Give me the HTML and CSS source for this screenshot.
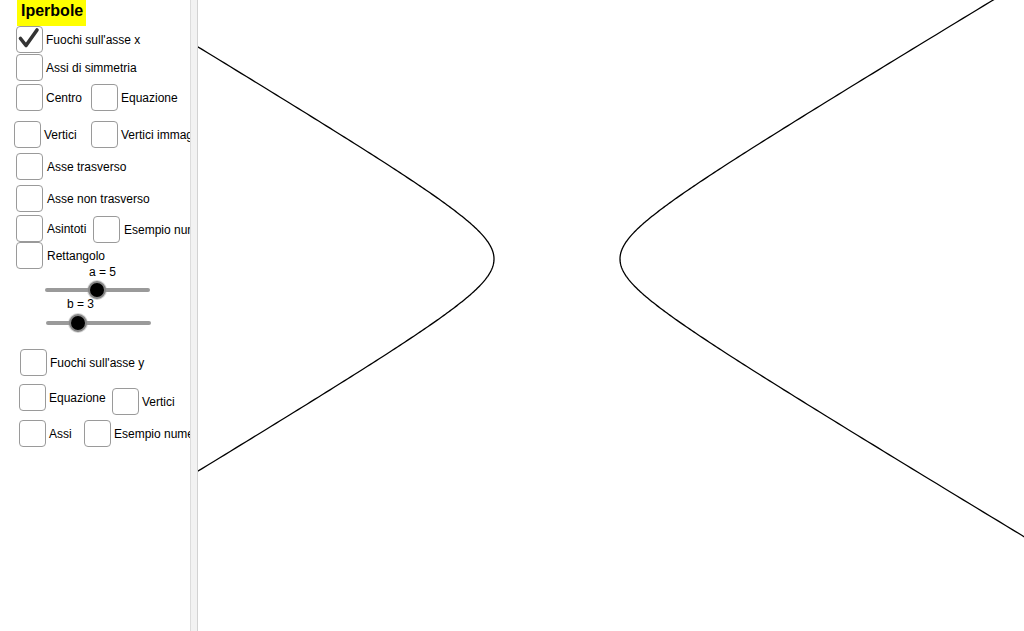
FILE: index.html
```html
<!DOCTYPE html>
<html>
<head>
<meta charset="utf-8">
<link rel="stylesheet" href="styles.css">
</head>
<body>
<div class="app">
  <aside class="panel">
    <div class="title">Iperbole</div>

    <div class="row r1">
      <span class="cb checked"><svg viewBox="0 0 27 27"><path d="M4.5 12.5 L10 19.5 L21 4" /></svg></span>
      <span class="lbl">Fuochi sull'asse x</span>
    </div>
    <div class="row r2">
      <span class="cb"></span><span class="lbl">Assi di simmetria</span>
    </div>
    <div class="row r3">
      <span class="item w75"><span class="cb"></span><span class="lbl">Centro</span></span>
      <span class="item"><span class="cb"></span><span class="lbl">Equazione</span></span>
    </div>
    <div class="row r4">
      <span class="item w77"><span class="cb"></span><span class="lbl">Vertici</span></span>
      <span class="item"><span class="cb"></span><span class="lbl">Vertici immaginari</span></span>
    </div>
    <div class="row r5">
      <span class="cb"></span><span class="lbl wide">Asse trasverso</span>
    </div>
    <div class="row r6">
      <span class="cb"></span><span class="lbl wide">Asse non trasverso</span>
    </div>
    <div class="row r7">
      <span class="item w77"><span class="cb"></span><span class="lbl wide">Asintoti</span></span>
      <span class="item down1"><span class="cb"></span><span class="lbl wide">Esempio numerico</span></span>
    </div>
    <div class="row r8">
      <span class="cb"></span><span class="lbl wide">Rettangolo</span>
    </div>

    <div class="slider sa">
      <div class="slabel">a = 5</div>
      <div class="track"><span class="knob" style="left: 49.5%"></span></div>
    </div>
    <div class="slider sb">
      <div class="slabel">b = 3</div>
      <div class="track"><span class="knob" style="left: 30.5%"></span></div>
    </div>

    <div class="row r9">
      <span class="cb"></span><span class="lbl">Fuochi sull'asse y</span>
    </div>
    <div class="row r10">
      <span class="item w93"><span class="cb"></span><span class="lbl">Equazione</span></span>
      <span class="item down4"><span class="cb"></span><span class="lbl">Vertici</span></span>
    </div>
    <div class="row r11">
      <span class="item w65"><span class="cb"></span><span class="lbl">Assi</span></span>
      <span class="item"><span class="cb"></span><span class="lbl">Esempio numerico</span></span>
    </div>
  </aside>
  <div class="divider"></div>
  <main class="graph">
    <svg id="plot" class="plot" viewBox="0 0 826 631" preserveAspectRatio="none">
      <path id="left" class="curve" d=""></path>
      <path id="right" class="curve" d=""></path>
    </svg>
  </main>
</div>
<script src="script.js"></script>
</body>
</html>
```

FILE: styles.css
```css
* { box-sizing: border-box; }
html, body {
  margin: 0;
  padding: 0;
  background: #ffffff;
  width: 1024px;
  height: 631px;
  overflow: hidden;
  font-family: "Liberation Sans", Arial, sans-serif;
  color: #000;
}
.app {
  display: flex;
  width: 1024px;
  height: 631px;
}
.panel {
  width: 190px;
  flex: 0 0 190px;
  height: 631px;
  overflow: hidden;
  white-space: nowrap;
  background: #fff;
}
.title {
  display: inline-block;
  margin-left: 17px;
  height: 26px;
  width: 69px;
  padding-left: 4px;
  background: #ffff00;
  font-weight: bold;
  font-size: 16px;
  line-height: 22px;
}
.row {
  display: flex;
  align-items: center;
  height: 27px;
}
.item {
  display: flex;
  align-items: center;
  flex: 0 0 auto;
}
.w75 { width: 75px; }
.w77 { width: 77px; }
.w93 { width: 93px; }
.w65 { width: 65px; }
.down1 { transform: translateY(1px); }
.down4 { transform: translateY(4px); }

.cb {
  display: inline-block;
  flex: 0 0 27px;
  width: 27px;
  height: 27px;
  border: 1px solid #9a9a9a;
  border-radius: 4px;
  background: #fff;
  position: relative;
}
.cb svg {
  position: absolute;
  left: -1px;
  top: -1px;
  width: 27px;
  height: 27px;
}
.cb svg path {
  fill: none;
  stroke: #333;
  stroke-width: 3.6;
  stroke-linecap: round;
  stroke-linejoin: round;
}
.lbl {
  font-size: 12px;
  margin-left: 3px;
  line-height: 13px;
  padding-top: 2px;
}
.lbl.wide { margin-left: 4px; }

.r1 { margin-top: 0; padding-left: 16px; }
.r2 { margin-top: 1px; padding-left: 16px; }
.r3 { margin-top: 3px; padding-left: 16px; }
.r4 { margin-top: 10px; padding-left: 14px; }
.r5 { margin-top: 5px; padding-left: 16px; }
.r6 { margin-top: 5px; padding-left: 16px; }
.r7 { margin-top: 3px; padding-left: 16px; }
.r8 { margin-top: 0px; padding-left: 16px; }
.r9 { margin-top: 24px; padding-left: 20px; }
.r10 { margin-top: 8px; padding-left: 19px; }
.r11 { margin-top: 9px; padding-left: 19px; }

.slider { position: relative; }
.slabel {
  font-size: 12px;
  line-height: 13px;
}
.sa { margin-top: -3px; }
.sa .slabel { padding-left: 89px; }
.sa .track { margin-left: 45px; margin-top: 9px; }
.sb { margin-top: 6px; }
.sb .slabel { padding-left: 67px; }
.sb .track { margin-left: 46px; margin-top: 10px; }
.track {
  position: relative;
  width: 105px;
  height: 4px;
  border-radius: 2px;
  background: #9a9a9a;
}
.knob {
  position: absolute;
  top: 50%;
  width: 18px;
  height: 18px;
  margin-left: -9px;
  margin-top: -9px;
  border-radius: 50%;
  background: #000;
  border: 2.5px solid #858585;
  box-shadow: 0 0 0 1px rgba(150,150,150,0.4);
}

.divider {
  flex: 0 0 8px;
  width: 8px;
  height: 631px;
  background: #f2f2f2;
  border-left: 1px solid #dcdcdc;
  border-right: 1px solid #d2d2d2;
}
.graph {
  flex: 1 1 auto;
  height: 631px;
  background: #fff;
  overflow: hidden;
}
.plot {
  display: block;
  width: 826px;
  height: 631px;
}
.curve {
  fill: none;
  stroke: #000;
  stroke-width: 1.3;
}
```

FILE: script.js
```js
(function () {
  var a = 5, b = 3, s = 12.6, cx = 359, cy = 259;
  function branch(sign) {
    var d = "";
    for (var i = 0; i <= 400; i++) {
      var t = -3.4 + (6.8 * i) / 400;
      var x = cx + sign * a * Math.cosh(t) * s;
      var y = cy - b * Math.sinh(t) * s;
      d += (i === 0 ? "M" : "L") + x.toFixed(2) + " " + y.toFixed(2) + " ";
    }
    return d;
  }
  document.getElementById("left").setAttribute("d", branch(-1));
  document.getElementById("right").setAttribute("d", branch(1));
})();
```
